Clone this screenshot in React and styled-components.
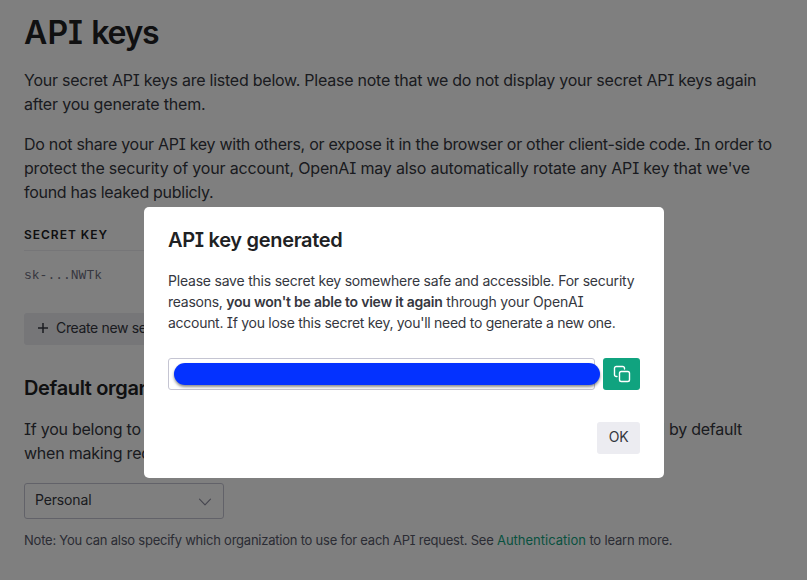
import React from "react";
import styled, { createGlobalStyle } from "styled-components";

const GlobalStyle = createGlobalStyle`
  *, *::before, *::after { box-sizing: border-box; }
  body {
    margin: 0;
    background: #fff;
    color: #353740;
    font: 400 16px/24px Inter, "Liberation Sans", sans-serif;
    font-feature-settings: "cv08" 1;
    overflow: hidden;
  }
`;

const Page = styled.main`
  height: 580px;
  padding: 13px 24px 0;
  overflow: hidden;
`;

const Line = styled.span`
  display: block;
  white-space: nowrap;
  letter-spacing: ${(p) => p.$track || 0}px;
`;

const Run = styled.span`
  letter-spacing: ${(p) => p.$track || 0}px;
`;

const Title = styled.h1`
  margin: 0 0 15px;
  color: #202123;
  font-size: 32px;
  font-weight: 600;
  line-height: 40px;
`;

const Paragraph = styled.p`
  margin: 0 0 16px;
`;

const Table = styled.section`
  width: 560px;
  margin-top: 22px;
`;

const ColumnHeading = styled.div`
  height: 25px;
  border-bottom: 1px solid #ececf1;
  color: #202123;
  font-size: 12px;
  font-weight: 600;
  line-height: 17px;
  letter-spacing: 0.98px;
`;

const KeyCell = styled.div`
  height: 48px;
  color: #6e6e80;
  font: 13px/50px "Liberation Mono", monospace;
`;

const CreateButton = styled.button`
  display: flex;
  align-items: center;
  gap: 7px;
  width: 190px;
  height: 32px;
  margin: 14px 0 0;
  padding: 0 12px 2px 13px;
  border: 0;
  border-radius: 3px;
  background: #ececf1;
  color: #353740;
  font: inherit;
  font-feature-settings: inherit;
  font-size: 14px;
`;

const SectionTitle = styled.h2`
  margin: 27px 0 13px;
  color: #202123;
  font-size: 20px;
  font-weight: 600;
  line-height: 32px;
  letter-spacing: -0.35px;
`;

const Select = styled.div`
  display: flex;
  align-items: center;
  justify-content: space-between;
  width: 200px;
  height: 36px;
  margin-top: 18px;
  padding: 0 11px 2px 10px;
  border: 1px solid #c5c5d2;
  border-radius: 3px;
  font-size: 14px;
  letter-spacing: -0.15px;
`;

const Chevron = styled.svg`
  margin-top: 4px;
`;

const Note = styled.div`
  margin-top: 11px;
  color: #565869;
  font-size: 13px;
  line-height: 20px;
  white-space: nowrap;
`;

const Link = styled.a`
  color: #10a37f;
`;

const Backdrop = styled.div`
  position: fixed;
  inset: 0;
  display: flex;
  align-items: flex-start;
  justify-content: flex-start;
  padding: 207px 0 0 144px;
  background: rgba(0, 0, 0, 0.5);
`;

const Modal = styled.div`
  width: 520px;
  height: 271px;
  padding: 19px 24px 24px;
  border-radius: 5px;
  background: #fff;
  font-size: 14px;
  line-height: 21px;
`;

const ModalTitle = styled.h3`
  margin: 0 0 16px;
  color: #202123;
  font-size: 20px;
  font-weight: 600;
  line-height: 28px;
  letter-spacing: -0.31px;
`;

const ModalText = styled.p`
  margin: 0;
`;

const Strong = styled.strong`
  font-weight: 600;
  letter-spacing: ${(p) => p.$track}px;
`;

const KeyRow = styled.div`
  display: flex;
  gap: 8px;
  margin-top: 25px;
`;

const KeyField = styled.div`
  width: 427px;
  height: 32px;
  padding: 4px 0 0 5px;
  border: 1px solid #c5c5d2;
  border-radius: 3px;
`;

const Redaction = styled.div`
  width: 426px;
  height: 22px;
  border-radius: 11px;
  background: #0432ff;
  box-shadow: 0 2px 3px rgba(0, 0, 0, 0.45);
`;

const CopyButton = styled.button`
  display: grid;
  place-items: center;
  width: 37px;
  height: 32px;
  padding: 0 0 1px;
  border: 0;
  border-radius: 3px;
  background: #10a37f;
  color: #fff;
`;

const Footer = styled.div`
  display: flex;
  justify-content: flex-end;
  margin-top: 32px;
`;

const OkButton = styled.button`
  width: 43px;
  height: 32px;
  padding: 0 0 3px;
  border: 0;
  border-radius: 3px;
  background: #ececf1;
  color: #353740;
  font: inherit;
  font-feature-settings: inherit;
  letter-spacing: -0.4px;
`;

export default function App() {
  return (
    <>
      <GlobalStyle />
      <Page>
        <Title>
          <Run $track={0.1}>API </Run>
          <Run $track={-1.3}>keys</Run>
        </Title>
        <Paragraph>
          <Line $track={-0.245}>Your secret API keys are listed below. Please note that we do not display your secret API keys again</Line>
          <Line $track={-0.19}>after you generate them.</Line>
        </Paragraph>
        <Paragraph>
          <Line $track={-0.285}>Do not share your API key with others, or expose it in the browser or other client-side code. In order to</Line>
          <Line $track={-0.175}>protect the security of your account, OpenAI may also automatically rotate any API key that we've</Line>
          <Line $track={-0.29}>found has leaked publicly.</Line>
        </Paragraph>
        <Table>
          <ColumnHeading>SECRET KEY</ColumnHeading>
          <KeyCell>sk-...NWTk</KeyCell>
        </Table>
        <CreateButton>
          <svg width="12" height="12" viewBox="0 0 12 12" fill="none" stroke="currentColor" strokeWidth="1.5">
            <path d="M6 1v10M1 6h10" />
          </svg>
          <Line $track={-0.35}>Create new secret key</Line>
        </CreateButton>
        <SectionTitle>Default organization</SectionTitle>
        <Paragraph>
          <Line $track={-0.25}>
            If you belong to
            <Run $track={-0.133}> multiple organizations, this setting controls which organization is used</Run>
            <Run $track={-0.25}> by default</Run>
          </Line>
          <Line $track={-0.22}>when making requests with the API keys above.</Line>
        </Paragraph>
        <Select>
          Personal
          <Chevron width="14" height="8" viewBox="0 0 14 8" fill="none" stroke="#8e8ea0" strokeWidth="1.2" strokeLinecap="round" strokeLinejoin="round">
            <path d="M1.5 1.2l5.5 5.6 5.5-5.6" />
          </Chevron>
        </Select>
        <Note>
          <Run $track={-0.228}>Note: You can also specify which organization to use for each API request. See </Run>
          <Link>Authentication</Link>
          <Run $track={-0.17}> to learn more.</Run>
        </Note>
      </Page>
      <Backdrop>
        <Modal role="dialog">
          <ModalTitle>API key generated</ModalTitle>
          <ModalText>
            <Line $track={-0.212}>Please save this secret key somewhere safe and accessible. For security</Line>
            <Line $track={-0.26}>
              reasons, <Strong $track={-0.23}>you won't be able to view it again</Strong>
              <Run $track={-0.17}> through your OpenAI</Run>
            </Line>
            <Line $track={-0.28}>account. If you lose this secret key, you'll need to generate a new one.</Line>
          </ModalText>
          <KeyRow>
            <KeyField>
              <Redaction />
            </KeyField>
            <CopyButton aria-label="Copy">
              <svg width="18" height="18" viewBox="0 0 18 18" fill="none" stroke="currentColor" strokeWidth="1.4" strokeLinecap="round" strokeLinejoin="round">
                <rect x="6.5" y="6.5" width="10" height="10" rx="1.8" />
                <path d="M4 11.5H3.3A1.8 1.8 0 0 1 1.5 9.7V3.3A1.8 1.8 0 0 1 3.3 1.5h6.4A1.8 1.8 0 0 1 11.5 3.3V4" />
              </svg>
            </CopyButton>
          </KeyRow>
          <Footer>
            <OkButton>OK</OkButton>
          </Footer>
        </Modal>
      </Backdrop>
    </>
  );
}
